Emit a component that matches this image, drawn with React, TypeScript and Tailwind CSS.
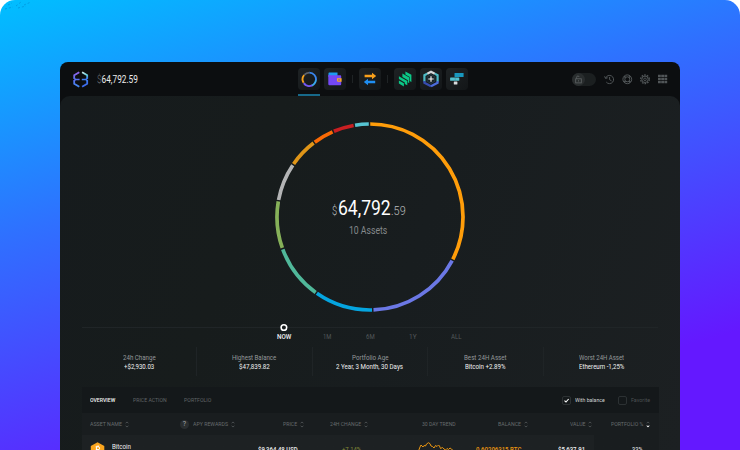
import { useLayoutEffect, useRef, useState } from "react";
import type { ReactNode } from "react";

/* Text set to a given width, which condenses the regular Roboto face. */
function Fit({ w, className = "", children }: { w: number; className?: string; children: ReactNode }) {
  const ref = useRef<HTMLSpanElement>(null);
  const [scale, setScale] = useState(1);
  useLayoutEffect(() => {
    if (ref.current) setScale(w / ref.current.offsetWidth);
  }, [w]);
  return (
    <span className={`block shrink-0 whitespace-nowrap ${className}`} style={{ width: w }}>
      <span ref={ref} className="inline-block origin-left" style={{ transform: `scaleX(${scale})` }}>
        {children}
      </span>
    </span>
  );
}

const segments: [number, number, string][] = [
  [-0.3, 117.5, "#ff9d0a"],
  [117.5, 178.3, "#6b78e5"],
  [178.3, 215.3, "#05a5e0"],
  [215.3, 250.1, "#50b89a"],
  [250.1, 280.1, "#86b159"],
  [280.1, 304.3, "#b3b4b5"],
  [304.3, 323.1, "#df9518"],
  [323.1, 336.7, "#fa6a05"],
  [336.7, 350.3, "#c91f22"],
  [350.3, 359.7, "#56c4d2"],
];

function arc(cx: number, cy: number, r: number, from: number, to: number) {
  const pt = (d: number) => {
    const a = (d * Math.PI) / 180;
    return `${(cx + r * Math.sin(a)).toFixed(2)} ${(cy - r * Math.cos(a)).toFixed(2)}`;
  };
  return `M${pt(from)}A${r} ${r} 0 ${to - from > 180 ? 1 : 0} 1 ${pt(to)}`;
}

function Ring() {
  return (
    <svg className="block" width="190" height="190" viewBox="0 0 190 190" fill="none">
      {segments.map(([a, b, c]) => (
        <path key={c} d={arc(95, 95, 93, a + 0.45, b - 0.45)} stroke={c} strokeWidth="3.7" />
      ))}
    </svg>
  );
}

function Logo() {
  return (
    <svg className="-mr-px ml-px" width="16" height="17" viewBox="0 0 16 17" fill="none">
      <defs>
        <linearGradient id="lg1" x1="0" y1="0" x2="0" y2="17" gradientUnits="userSpaceOnUse">
          <stop stopColor="#9a62e8" />
          <stop offset=".5" stopColor="#5a70f0" />
          <stop offset="1" stopColor="#3f8cf0" />
        </linearGradient>
        <linearGradient id="lg2" x1="10" y1="0" x2="14" y2="17" gradientUnits="userSpaceOnUse">
          <stop stopColor="#e8f4f4" />
          <stop offset=".28" stopColor="#5cc9d8" />
          <stop offset=".5" stopColor="#3f7df2" />
          <stop offset="1" stopColor="#3b62ea" />
        </linearGradient>
      </defs>
      <path d="M6.3 1.2L1.2 4.3V7.2M1.2 9.8V12.7L6.3 15.8" stroke="url(#lg1)" strokeWidth="1.8" />
      <path d="M9.1 1.2L14.2 4.3V7.2M14.2 9.8V12.7L9.1 15.8" stroke="url(#lg2)" strokeWidth="1.8" />
      <path d="M.6 6.9L2.6 8.5L.6 10.1M2.2 8.5H6.6" stroke="#5a70f0" strokeWidth="1.6" />
      <path d="M14.8 6.9L12.8 8.5L14.8 10.1M13.2 8.5H8.8" stroke="#3f7df2" strokeWidth="1.6" />
    </svg>
  );
}

function Tile({ children }: { children: ReactNode }) {
  return (
    <div className="flex h-[22px] w-[22px] items-center justify-center rounded-[4px] bg-linear-to-br from-[#1e2224] to-[#131618]">
      {children}
    </div>
  );
}

function RingIcon() {
  return (
    <svg width="16" height="16" viewBox="0 0 16 16" fill="none" strokeWidth="1.9">
      <path d={arc(8.3, 8.3, 6.7, 0, 100)} stroke="#3a86ee" />
      <path d={arc(8.3, 8.3, 6.7, 98, 160)} stroke="#3aa8ee" />
      <path d={arc(8.3, 8.3, 6.7, 155, 235)} stroke="#7558ef" />
      <path d={arc(8.3, 8.3, 6.7, 238, 310)} stroke="#f5a11c" />
      <path d={arc(8.3, 8.3, 6.7, 312, 360)} stroke="#5d6470" />
    </svg>
  );
}

function WalletIcon() {
  return (
    <svg width="16" height="16" viewBox="0 0 16 16">
      <path d="M2 1.6H10.5V6H1.5V2Z" fill="#1d9bf0" />
      <path d="M1.3 3.6C2 4.3 3 4.3 4 4.3H13.3Q14.2 4.3 14.2 5.2V13.2Q14.2 14.2 13.2 14.2H2.4Q1.3 14.2 1.3 13Z" fill="#7448f5" />
      <path d="M10 7.2H14.6V10.8H11.2Q10 10.8 10 9.8Z" fill="#f7a823" />
      <circle cx="12" cy="9" r=".8" fill="#5a3ad0" />
    </svg>
  );
}

function SwapIcon() {
  return (
    <svg width="14" height="14" viewBox="0 0 14 14">
      <path d="M1.6 2.8H9V.7L13.2 4L9 7.2V5.2H1.6Z" fill="#f9a01b" />
      <path d="M12.2 8.8V11.2H5V13.3L.8 10L5 6.8V8.8Z" fill="#1f8ef2" />
    </svg>
  );
}

function CompoundIcon() {
  return (
    <svg width="14" height="16" viewBox="0 0 14 16" fill="#0bc887">
      <path d="M.9 9.4L5.9 12.3V15.4L.9 12.4Z" />
      <path d="M.9 5.2L9.3 10V14.2L6.8 12.9V11.4L.9 8Z" />
      <path d="M4.4 2.6L11.2 6.5V12L9.9 11.4V9.2L4.4 6.1Z" />
      <path d="M7.4 .4L13.4 3.7V10.9L11.7 9.9V5.9L7.4 3.4Z" />
    </svg>
  );
}

function HexPlusIcon() {
  return (
    <svg width="18" height="18" viewBox="0 0 18 18" fill="none" strokeWidth="2.2">
      <path d="M5.2 3.7L9 1.8L12.8 3.7" stroke="#d5d8da" />
      <path d="M5.2 3.7L2.4 5.2V11.5M12.8 3.7L15.6 5.2V11.5" stroke="#4dbac4" />
      <path d="M2.4 11V12.8L9 16.3" stroke="#364cae" />
      <path d="M15.6 11V12.8L9 16.3" stroke="#4b6cdb" />
      <path d="M9 4.6L12.8 6.7V11.3L9 13.4L5.2 11.3V6.7Z" fill="#1a2226" stroke="#27444c" strokeWidth=".8" />
      <path d="M9 6.3V11.7M6.3 9H11.7" stroke="#f4f5f5" strokeWidth="1.2" />
    </svg>
  );
}

function BlocksIcon() {
  return (
    <svg width="16" height="14" viewBox="0 0 16 14">
      <rect x="5.5" y="1.1" width="9.1" height="3.8" rx=".5" fill="#1898be" />
      <rect x="1.1" y="5.5" width="9.2" height="3.2" rx=".5" fill="#54c1cd" />
      <rect x="4.8" y="9.4" width="3.6" height="3.2" rx=".5" fill="#d9dcdd" />
      <path d="M6.2 5.5V8.7M10.3 1.2V4.8" stroke="#3486a0" strokeWidth=".5" />
    </svg>
  );
}

function ToolIcons() {
  return (
    <div className="flex items-center gap-[7px] text-[#515658]">
      <svg width="11" height="11" viewBox="0 0 11 11" fill="none" stroke="currentColor" strokeWidth="1">
        <path d="M1.6 4.2A4.1 4.1 0 1 1 2.3 8.1M.6 2.3L1.5 4.4L3.7 3.8M5.6 3V5.7L7.5 6.8" />
      </svg>
      <svg width="11" height="11" viewBox="0 0 11 11" fill="none" stroke="currentColor" strokeWidth="1">
        <circle cx="5.3" cy="5.3" r="4.4" />
        <circle cx="5.3" cy="5.3" r="2.5" />
        <path d="M2.2 2.2L3.5 3.5M8.4 2.2L7.1 3.5M2.2 8.4L3.5 7.1M8.4 8.4L7.1 7.1" strokeWidth="1.6" />
      </svg>
      <svg width="11" height="11" viewBox="0 0 11 11" fill="none" stroke="currentColor">
        <circle cx="5" cy="5.3" r="4.3" strokeWidth="1.3" strokeDasharray="1.65 1.05" />
        <circle cx="5" cy="5.3" r="3.2" strokeWidth="1" />
        <circle cx="5" cy="5.3" r="1.3" strokeWidth=".9" />
      </svg>
      <svg width="10" height="10" viewBox="0 0 10 10" stroke="currentColor" strokeWidth="2.3">
        <path d="M0 1.9H9.2M0 5H9.2M0 8.1H9.2" strokeDasharray="2.8 .4" />
      </svg>
    </div>
  );
}

function Header() {
  return (
    <header className="flex h-[34px] items-center pl-3 pr-3">
      <div className="flex w-[226px] items-center gap-[9px]">
        <Logo />
        <Fit w={41.3} className="pt-px text-[10px] leading-3 text-[#eceded]">
          <span className="font-light text-[#74787a]">$</span>64,792.59
        </Fit>
      </div>
      <nav className="flex h-[34px] items-center">
        <div className="flex h-full flex-col justify-between pt-[6px]">
          <Tile><RingIcon /></Tile>
          <div className="h-[2px] w-[22px] bg-[#17698a]" />
        </div>
        <div className="ml-1"><Tile><WalletIcon /></Tile></div>
        <div className="mx-[6px] h-[8px] w-px bg-[#1f2325]" />
        <Tile><SwapIcon /></Tile>
        <div className="mx-[6px] h-[8px] w-px bg-[#1f2325]" />
        <Tile><CompoundIcon /></Tile>
        <div className="ml-1"><Tile><HexPlusIcon /></Tile></div>
        <div className="ml-1"><Tile><BlocksIcon /></Tile></div>
      </nav>
      <div className="ml-auto flex items-center gap-2">
        <div className="flex h-[13px] w-[24px] items-center rounded-full bg-[#1b1f20]">
          <div className="flex h-[13px] w-[13px] items-center justify-center rounded-full bg-[#292d2e]">
            <svg width="9" height="9" viewBox="0 0 9 9" fill="none" stroke="#606466" strokeWidth=".8">
              <rect x="1.7" y="3.8" width="5.6" height="4.1" />
              <path d="M2.6 3.8V2.3Q2.6 1 3.9 1Q5 1 5.1 2M4.5 5.2V6.5" />
            </svg>
          </div>
        </div>
        <ToolIcons />
      </div>
    </header>
  );
}

const periods: [string, number][] = [["NOW", 14], ["1M", 8.3], ["6M", 8.6], ["1Y", 7.2], ["ALL", 10.8]];

function Timeline() {
  return (
    <div className="mx-[22px] mt-[12px] h-[18px]">
      <div className="flex flex-col">
        <div className="-mt-px flex h-[8px] items-center">
          <div className="h-px w-[198px] bg-[#202527]" />
          <svg width="8" height="8" viewBox="0 0 8 8" fill="none" stroke="#fff" strokeWidth="1.6">
            <circle cx="3.9" cy="4.6" r="2.8" />
          </svg>
          <div className="h-px flex-1 bg-[#202527]" />
        </div>
        <div className="flex pl-[180.5px] pt-px">
          {periods.map(([label, w], i) => (
            <div key={label} className="flex w-[43px] justify-center pt-[1px]">
              <Fit w={w} className={`text-[6.3px] leading-[8px] ${i === 0 ? "font-medium text-[#f0f1f1]" : "text-[#53585a]"}`}>
                {label}
              </Fit>
            </div>
          ))}
        </div>
      </div>
    </div>
  );
}

const stats: [string, number, string, number][] = [
  ["24h Change", 32.5, "+$2,930.03", 30.5],
  ["Highest Balance", 44.5, "$47,839.82", 31],
  ["Portfolio Age", 36.5, "2 Year, 3 Month, 30 Days", 67],
  ["Best 24H Asset", 42.5, "Bitcoin +2.89%", 40.5],
  ["Worst 24H Asset", 45.5, "Ethereum -1,25%", 45.5],
];

function Stats() {
  return (
    <div className="ml-[22px] mr-[21px] mt-[5px] grid grid-cols-5">
      {stats.map(([a, aw, b, bw], i) => (
        <div key={a} className={`flex h-[29px] flex-col items-center pt-[7px] ${i < 4 ? "border-r border-[#1f2426]" : ""}`}>
          <Fit w={aw} className="text-[7px] leading-[9px] text-[#94989a]">{a}</Fit>
          <Fit w={bw} className="text-[7px] leading-[9px] text-[#f0f1f1]">{b}</Fit>
        </div>
      ))}
    </div>
  );
}

function Sort({ active = false }: { active?: boolean }) {
  return (
    <svg className="ml-[3px] shrink-0" width="4" height="7" viewBox="0 0 4 7" fill="none" stroke="#606567" strokeWidth=".7">
      <path d="M.6 2.3L2 .9L3.4 2.3" />
      <path d="M.6 4.7L2 6.1L3.4 4.7" fill={active ? "#fff" : "none"} stroke={active ? "#fff" : "#606567"} />
    </svg>
  );
}

const columns: [string, number, boolean][] = [
  ["PRICE", 14.5, true],
  ["24H CHANGE", 31.5, true],
  ["30 DAY TREND", 34, false],
  ["BALANCE", 23, true],
  ["VALUE", 15.5, true],
  ["PORTFOLIO %", 32, true],
];

const grid = "grid grid-cols-[90px_55px_69px_64px_88px_72px_64px_58px] pl-[8px]";

function AssetTable() {
  return (
    <section className="ml-[22px] mt-[11px] w-[577px]">
      <div className="flex h-[26px] items-center bg-[#14181a] pl-[8px] pr-[9px] text-[5.7px] leading-[8px]">
        <Fit w={25.5} className="font-medium text-[#f0f1f1]">OVERVIEW</Fit>
        <Fit w={33.5} className="ml-[17.5px] text-[#606567]">PRICE ACTION</Fit>
        <Fit w={27.5} className="ml-[17.5px] text-[#606567]">PORTFOLIO</Fit>
        <div className="ml-auto flex items-center">
          <div className="flex h-[9px] w-[9px] items-center justify-center rounded-[2px] border border-[#2c3133]">
            <svg width="7" height="7" viewBox="0 0 7 7" fill="none" stroke="#fff" strokeWidth="1.1">
              <path d="M1.5 3.6L3 5L5.6 2" />
            </svg>
          </div>
          <Fit w={30} className="ml-[4px] text-[6.2px] text-[#d2d4d5]">With balance</Fit>
          <div className="ml-[13px] h-[9px] w-[9px] rounded-[2px] border border-[#2c3133]" />
          <Fit w={19} className="ml-[4px] text-[6.2px] text-[#4c5153]">Favorite</Fit>
        </div>
      </div>
      <div className={`${grid} h-[22px] items-center bg-[#191d1f] text-[5.7px] leading-[8px] text-[#676c6e]`}>
        <div className="flex items-center"><Fit w={31.5}>ASSET NAME</Fit><Sort /></div>
        <div className="flex items-center">
          <div className="mr-[3.5px] flex h-[9px] w-[9px] items-center justify-center rounded-full bg-[#2a2e30] text-[7px] text-[#a5a8aa]">?</div>
          <Fit w={35}>APY REWARDS</Fit><Sort />
        </div>
        {columns.map(([label, w, sort]) => (
          <div key={label} className="flex items-center justify-end">
            <Fit w={w}>{label}</Fit>
            {sort && <Sort active={label === "PORTFOLIO %"} />}
          </div>
        ))}
      </div>
      <div className={`${grid} h-[30px] items-center bg-linear-to-r from-[#1d2123] from-[512px] to-[#191d1f] to-[512px] text-[6.5px] leading-[8px] text-[#f0f1f1]`}>
        <div className="flex items-center">
          <svg width="15" height="16" viewBox="0 0 15 16">
            <path d="M7.5 .3L14.3 4V12L7.5 15.7L.8 12V4Z" fill="#faa51e" />
            <path d="M5.7 4.8H8.3Q9.6 4.8 9.6 6.2Q9.6 7.6 8.3 7.6H5.9M8.3 7.6Q10 7.8 10 9.3Q10 10.9 8.3 10.9H5.5M6.4 4.8V10.9M7.2 3.6V4.8M8.6 3.6V4.8" fill="none" stroke="#fff" strokeWidth="1" />
          </svg>
          <Fit w={19} className="-mt-[6px] ml-[7px]">Bitcoin</Fit>
        </div>
        <div />
        <div className="flex justify-end pr-[7px]"><Fit w={39.5} className="font-medium">$9,364.48 USD</Fit></div>
        <div className="flex justify-end pr-[7px]"><Fit w={19} className="text-[#858a38]">+7.14%</Fit></div>
        <div className="flex justify-end pr-[3px]">
          <svg width="35" height="16" viewBox="0 0 35 16" fill="none" stroke="#e99511" strokeWidth="1">
            <path d="M.5 9L2 5L3 3L4 4L5 5L6 3.5L7.5 4L8.5 2L10.5 .7L12 1.7L13 4L14.5 4.5L16 6L17.5 3.5L19 4.5L20.5 3L21.5 4L22.5 6.5L24.5 5.5L26 7L27.5 8L29 6.5L30.5 7.5L32 6L33.5 7L34.5 8" />
          </svg>
        </div>
        <div className="flex justify-end pr-[7px]"><Fit w={45.5} className="font-medium text-[#e99511]">0.60206315 BTC</Fit></div>
        <div className="flex justify-end pr-[7px]"><Fit w={27} className="font-medium">$5,637.91</Fit></div>
        <div className="flex justify-end pr-[8px]"><Fit w={10.5}>33%</Fit></div>
      </div>
    </section>
  );
}

export default function App() {
  return (
    <div className="h-[450px] w-[740px] overflow-hidden bg-white font-[Roboto,sans-serif]">
      <div className="relative h-full rounded-t-[15px] bg-[linear-gradient(164deg,#00bfff_0%,#2f70ff_36%,#6418ff_82%)] px-[60px] pt-[62px]">
        <svg className="absolute left-0 top-0" width="34" height="14" viewBox="0 0 34 14" fill="none" stroke="#0091d8" strokeWidth=".7" strokeDasharray="2 2">
          <path d="M8 5L12 3M16 6L21 2M24 5L31 2M5 9L13 7M18 8L26 6" />
        </svg>
        <div className="h-[388px] overflow-hidden rounded-t-[8px] bg-[#0c0e10]">
          <Header />
          <main className="h-[354px] overflow-hidden rounded-t-[10px] bg-[linear-gradient(110deg,#161b1d_0%,#171c1c_30%,#181d1f_55%,#1c2022_100%)]">
            <div className="grid justify-center pt-[26px]">
              <div className="col-start-1 row-start-1"><Ring /></div>
              <div className="col-start-1 row-start-1 flex flex-col items-center pt-[74px]">
                <div className="-ml-[3px] flex items-baseline">
                  <Fit w={5.5} className="text-[13.5px] font-light text-[#b9bbbc]">$</Fit>
                  <Fit w={53} className="text-[20.5px] leading-[24px] text-white">64,792</Fit>
                  <Fit w={14.5} className="text-[13.5px] font-light text-[#b9bbbc]">.59</Fit>
                </div>
                <Fit w={38.5} className="-ml-[3px] mt-[4px] text-[11px] leading-[13px] text-[#85898b]">10 Assets</Fit>
              </div>
            </div>
            <Timeline />
            <Stats />
            <AssetTable />
          </main>
        </div>
      </div>
    </div>
  );
}
